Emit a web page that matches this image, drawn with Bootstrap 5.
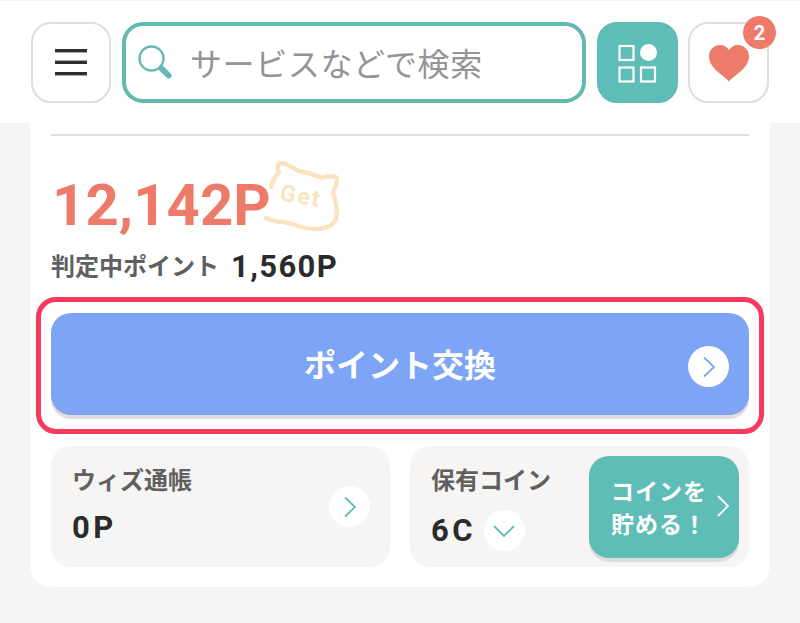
<!DOCTYPE html>
<html lang="ja">
<head>
  <meta charset="UTF-8" />
  <meta name="viewport" content="width=device-width, initial-scale=1.0"/>
  <title>ポイント</title>
  <link rel="stylesheet" href="https://cdn.jsdelivr.net/npm/bootstrap@5.3.0/dist/css/bootstrap.min.css"/>
  <style>
    body {
      background: #f6f5f3;
      font-family: Roboto, "Noto Sans CJK JP", sans-serif;
      color: #2b2b2b;
      height: 623px;
      overflow: hidden;
    }
    .top-bar {
      height: 123px;
      background: #fff;
      border-top: 1px solid #f6f5f3;
      padding: 21px 31px 0;
      gap: 11px;
    }
    .square-btn {
      width: 81px;
      height: 81px;
      flex: none;
      background: #fff;
      border: 2px solid #dedede;
      border-radius: 20px;
      position: relative;
    }
    .square-btn.menu-btn {
      width: 80px;
    }
    .square-btn.heart-btn {
      margin-left: -1px;
    }
    .square-btn.teal {
      background: #5ebdb6;
      border-color: #5ebdb6;
    }
    .search-box {
      height: 81px;
      border: 4px solid #62b9b2;
      border-radius: 21px;
      padding: 0 0 0 11px;
      gap: 17px;
      font-size: 32px;
      color: #949494;
      letter-spacing: 0.6px;
    }
    .search-box svg {
      margin-bottom: 2px;
    }
    .search-box span {
      padding-top: 4px;
    }
    .heart-count {
      position: absolute;
      top: -8px;
      right: -9px;
      width: 33px;
      height: 33px;
      background: #ee7a69;
      color: #fff;
      font-size: 20px;
      font-weight: 700;
    }
    .main-panel {
      margin: 0 30px;
      height: 464px;
      background: #fff;
      border-radius: 0 0 20px 20px;
      padding: 11px 21px 0;
    }
    .panel-line {
      height: 2px;
      background: #dfdfdf;
    }
    .point-row {
      margin-top: 34px;
      height: 70px;
    }
    .point-big {
      color: #ee7a69;
      font-size: 58px;
      line-height: 70px;
      font-weight: 700;
      letter-spacing: 0.1px;
      padding-left: 1px;
    }
    .get-mark {
      position: absolute;
      left: 211px;
      top: -13px;
    }
    .point-sub {
      margin-top: 10px;
      height: 34px;
      gap: 12px;
    }
    .sub-label {
      color: #606060;
      font-size: 24px;
      font-weight: 700;
    }
    .sub-value {
      font-size: 31px;
      font-weight: 700;
      letter-spacing: 1.4px;
    }
    .red-frame {
      margin: 13px -15px 0;
      padding: 11px 10px 14px;
      border: 5px solid #f83a5c;
      border-radius: 20px;
      height: 137px;
    }
    .exchange-btn {
      height: 102px;
      background: #7da4f5;
      border-radius: 20px;
      box-shadow: 0 4px 0 #dedede;
      color: #fff;
      font-size: 32px;
      font-weight: 700;
      padding-top: 4px;
      position: relative;
    }
    .exchange-btn .round-arrow {
      position: absolute;
      right: 20px;
      top: 33px;
    }
    .round-arrow {
      width: 41px;
      height: 41px;
      background: #fff;
      flex: none;
    }
    .box-row {
      margin-top: 12px;
      gap: 20px;
    }
    .info-box {
      flex: 1 1 0;
      height: 121px;
      background: #f6f5f3;
      border-radius: 20px;
      padding: 19px 21px 0;
      position: relative;
    }
    .box-label {
      color: #606060;
      font-size: 24px;
      line-height: 32px;
      font-weight: 700;
    }
    .box-value {
      margin-top: 13px;
      font-size: 31px;
      line-height: 36px;
      font-weight: 700;
      letter-spacing: 3.4px;
      gap: 8px;
    }
    .info-box > .round-arrow {
      position: absolute;
      right: 20px;
      top: 40px;
    }
    .coin-btn {
      position: absolute;
      right: 10px;
      top: 10px;
      width: 150px;
      height: 102px;
      background: #5ebdb6;
      border-radius: 20px;
      box-shadow: 0 4px 0 #dedede;
      color: #fff;
      font-size: 23px;
      line-height: 33px;
      font-weight: 700;
      padding: 20px 0 0 22px;
      letter-spacing: 1px;
    }
    .coin-btn svg {
      position: absolute;
      right: 9px;
      top: 38px;
    }
  </style>
</head>
<body>
  <header class="top-bar d-flex align-items-start">
    <div class="square-btn menu-btn d-flex align-items-center justify-content-center">
      <svg width="34" height="30" viewBox="0 0 34 30"><g fill="#2f2f2f"><rect x="1" y="1" width="32" height="3.4"/><rect x="1" y="12.6" width="32" height="3.4"/><rect x="1" y="24" width="32" height="3.4"/></g></svg>
    </div>
    <div class="search-box flex-grow-1 d-flex align-items-center">
      <svg width="36" height="36" viewBox="0 0 36 36" fill="none"><circle cx="14.5" cy="14.5" r="12" stroke="#62b9b2" stroke-width="2.4"/><path d="M24.5 24.5l7 7" stroke="#62b9b2" stroke-width="6" stroke-linecap="round"/></svg>
      <span>サービスなどで検索</span>
    </div>
    <div class="square-btn teal d-flex align-items-center justify-content-center">
      <svg width="40" height="40" viewBox="0 0 40 40" fill="none" stroke="#fff" stroke-width="2.2"><rect x="1.5" y="3" width="14" height="14"/><circle cx="30.5" cy="9.5" r="8.5" fill="#fff" stroke="none"/><rect x="1.5" y="24.5" width="14" height="14"/><rect x="23" y="24.5" width="14" height="14"/></svg>
    </div>
    <div class="square-btn heart-btn d-flex align-items-center justify-content-center">
      <svg width="42" height="38" viewBox="0 0 42 38"><path d="M21 37.5C17 32 1 24.500 1 12.500 1 5.500 6.500 1 12 1c4 0 7 2 9 5 2-3 5-5 9-5 5.500 0 11 4.500 11 11.500C41 24.500 25 32 21 37.500z" fill="#ee7a69"/></svg>
      <span class="heart-count rounded-circle d-flex align-items-center justify-content-center">2</span>
    </div>
  </header>

  <main class="main-panel">
    <div class="panel-line"></div>
    <div class="point-row position-relative">
      <svg class="get-mark" width="80" height="80" viewBox="0 0 80 80" fill="none">
        <path d="M9 30C11 22 14 18 17 15C15 11 15 6 20 6C25 6 30 11 37 14C42 15 52 17 60 21C66 19 74 18 75 22C76 27 71 32 71 36C74 43 76 55 74 62C72 68 67 70 61 71C53 73 44 72 36 69C30 66 25 66 21 65C14 65 8 63 4 61" stroke="#fbe3c2" stroke-width="4.400" stroke-linejoin="round" stroke-linecap="round"/>
        <text x="17" y="43" transform="rotate(10 17 43)" fill="#fbe3c2" font-family="Roboto, sans-serif" font-size="23" font-weight="700" letter-spacing="2">Get</text>
      </svg>
      <span class="point-big position-relative">12,142P</span>
    </div>
    <div class="point-sub d-flex align-items-center">
      <span class="sub-label">判定中ポイント</span>
      <span class="sub-value">1,560P</span>
    </div>
    <div class="red-frame">
      <div class="exchange-btn d-flex align-items-center justify-content-center">
        ポイント交換
        <span class="round-arrow rounded-circle d-flex align-items-center justify-content-center">
          <svg width="14" height="22" viewBox="0 0 14 22" fill="none"><path d="M2 1.500l10 9.500-10 9.500" stroke="#7da4f5" stroke-width="1.800"/></svg>
        </span>
      </div>
    </div>
    <div class="box-row d-flex">
      <div class="info-box">
        <div class="box-label">ウィズ通帳</div>
        <div class="box-value">0P</div>
        <span class="round-arrow rounded-circle d-flex align-items-center justify-content-center">
          <svg width="14" height="22" viewBox="0 0 14 22" fill="none"><path d="M2 1.500l10 9.500-10 9.500" stroke="#5ebdb6" stroke-width="1.800"/></svg>
        </span>
      </div>
      <div class="info-box">
        <div class="box-label">保有コイン</div>
        <div class="box-value d-flex align-items-center">6C
          <span class="round-arrow rounded-circle d-flex align-items-center justify-content-center">
            <svg width="22" height="14" viewBox="0 0 22 14" fill="none"><path d="M1 2l10 10 10-10" stroke="#5ebdb6" stroke-width="1.800"/></svg>
          </span>
        </div>
        <div class="coin-btn">コインを<br>貯める！
          <svg width="14" height="24" viewBox="0 0 14 24" fill="none"><path d="M2 2l10 10-10 10" stroke="#fff" stroke-width="1.800"/></svg>
        </div>
      </div>
    </div>
  </main>

  <script src="https://cdn.jsdelivr.net/npm/bootstrap@5.3.0/dist/js/bootstrap.bundle.min.js"></script>
</body>
</html>
